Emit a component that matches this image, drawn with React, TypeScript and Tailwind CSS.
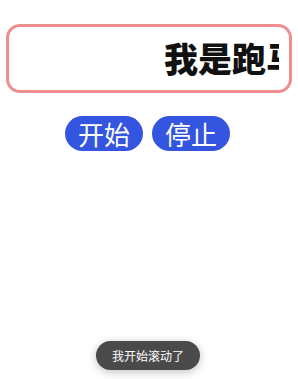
import React from 'react';

const font = { fontFamily: '"Noto Sans CJK SC", "Noto Sans", sans-serif' };

export default function App() {
  return (
    <div className="relative h-[379px] w-full bg-white" style={font}>
      <div className="pt-6 px-[6px]">
        {/* Marquee */}
        <div className="h-[69px] rounded-[14px] border-[3px] border-[#f08d8e] px-[10px] flex items-center">
          <div className="w-full overflow-hidden whitespace-nowrap">
            <span className="inline-block pl-[145px] text-[34px] font-black leading-none text-[#111]">
              我是跑马灯文字内容
            </span>
          </div>
        </div>

        {/* Controls */}
        <div className="mt-[23px] flex justify-center gap-[9px] pr-[3px]">
          <button className="h-[35px] w-[78px] rounded-full bg-[#3455e0] text-[26px] leading-none text-white">
            开始
          </button>
          <button className="h-[35px] w-[78px] rounded-full bg-[#3455e0] text-[26px] leading-none text-white">
            停止
          </button>
        </div>
      </div>

      {/* Toast */}
      <div className="absolute bottom-[9px] left-1/2 -translate-x-1/2 -ml-[1px] flex h-[29px] items-center rounded-full bg-[#4a4a4a] px-[16px] text-[12px] text-white shadow-[0_2px_8px_rgba(0,0,0,0.25)] whitespace-nowrap">
        我开始滚动了
      </div>
    </div>
  );
}
